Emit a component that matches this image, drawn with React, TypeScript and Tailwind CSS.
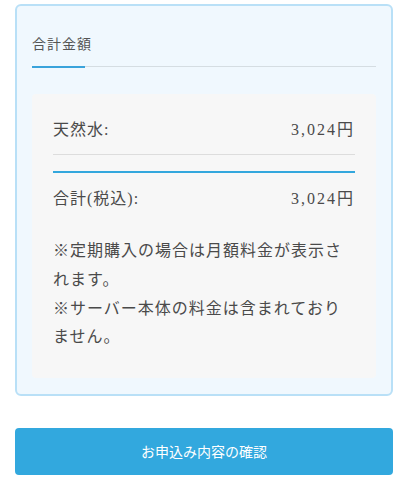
const serif = { fontFamily: "'Liberation Serif', 'Noto Sans CJK JP', serif" };

const PriceRow = ({ label, price }: { label: string; price: string }) => (
  <div className="flex items-center justify-between leading-[28px]">
    <span>{label}</span>
    <span className="tracking-[2px]">{price}</span>
  </div>
);

export default function App() {
  return (
    <div className="px-[15px] pt-[4px] bg-white" style={{ fontFamily: "'Noto Sans CJK JP', 'Noto Sans', sans-serif" }}>
      <div className="rounded-[6px] border-2 border-[#b9e0f7] bg-[#f0f8fe] px-[15px] pb-[16px]">
        <div className="pt-[27px] pb-[13px] text-[14px] leading-[20px] tracking-[1px] text-[#555]">合計金額</div>
        <div className="flex items-start">
          <div className="h-[2px] w-[53px] bg-[#3aa3db]" />
          <div className="h-px flex-1 bg-[#d5dde2]" />
        </div>

        <div className="mt-[26px] rounded-[4px] bg-[#f7f7f7] px-[21px] pt-[22px] pb-[26px] text-[16px] tracking-[1px] text-[#4a4a4a]" style={serif}>
          <div className="border-b border-[#dddddd] pb-[10px]">
            <PriceRow label="天然水:" price="3,024円" />
          </div>
          <div className="mt-[16px] border-t-2 border-[#33a7dd] pt-[12px]">
            <PriceRow label="合計(税込):" price="3,024円" />
          </div>
          <div className="mt-[24px] leading-[28.8px]">
            <p>※定期購入の場合は月額料金が表示されます。</p>
            <p>※サーバー本体の料金は含まれておりません。</p>
          </div>
        </div>
      </div>

      <button className="mt-[32px] flex h-[47px] w-full items-center justify-center rounded-[4px] bg-[#32a8de] text-[14px] text-white">
        お申込み内容の確認
      </button>
    </div>
  );
}
